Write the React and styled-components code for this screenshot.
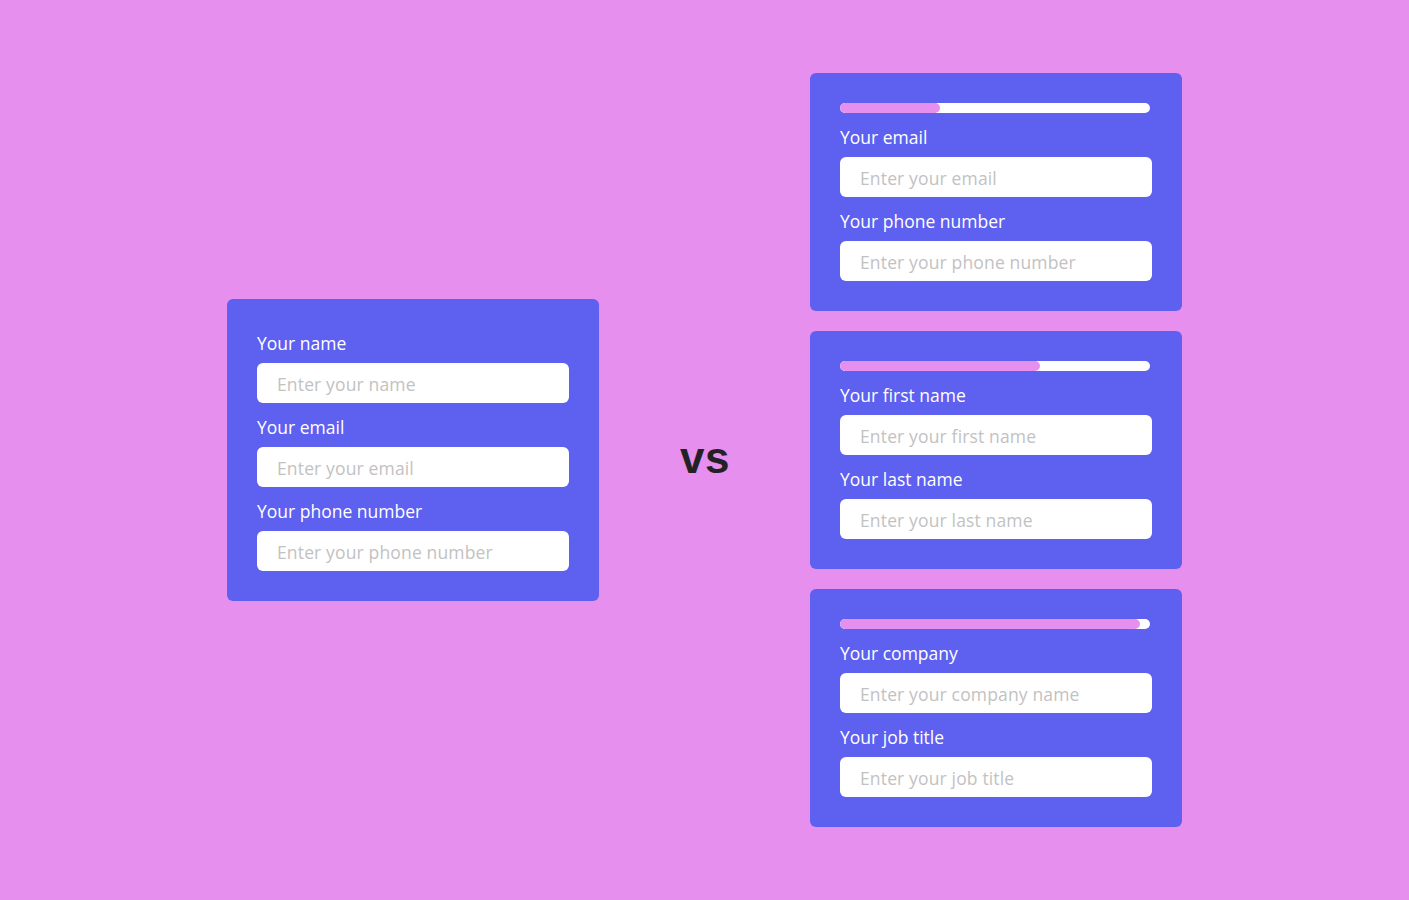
import styled, { createGlobalStyle } from "styled-components";

const GlobalStyle = createGlobalStyle`
  html, body {
    margin: 0;
    padding: 0;
    background: #e68fee;
  }
  * { box-sizing: border-box; }
`;

const Page = styled.div`
  width: 100%;
  height: 900px;
  display: flex;
  align-items: center;
  justify-content: center;
  gap: 81px;
  font-family: "Open Sans", "Liberation Sans", sans-serif;
`;

const Column = styled.div`
  display: flex;
  flex-direction: column;
  gap: 20px;
`;

const Card = styled.form`
  width: 372px;
  background: #5e60f0;
  border-radius: 6px;
  padding: 30px;
  display: flex;
  flex-direction: column;
`;

const Progress = styled.div`
  width: 310px;
  height: 10px;
  border-radius: 5px;
  background: #ffffff;
  overflow: hidden;
  margin-bottom: 10px;
`;

const ProgressFill = styled.div`
  height: 100%;
  width: ${(p) => p.$value}px;
  border-radius: 5px;
  background: #e68fee;
`;

const Field = styled.label`
  display: flex;
  flex-direction: column;
  & + & {
    margin-top: 10px;
  }
`;

const Label = styled.span`
  height: 24px;
  line-height: 28px;
  margin-bottom: 10px;
  color: #ffffff;
  font-size: 17.5px;
`;

const Input = styled.input`
  height: 40px;
  width: 100%;
  border: none;
  outline: none;
  border-radius: 6px;
  background: #ffffff;
  padding: 2px 20px 0;
  font-family: inherit;
  font-size: 17.5px;
  letter-spacing: 0.15px;
  color: #333;
  &::placeholder {
    color: #c2c2c2;
  }
`;

const Versus = styled.div`
  width: 49px;
  text-align: center;
  margin-top: 16px;
  font-family: "Liberation Sans", Arial, sans-serif;
  font-weight: 700;
  font-size: 44px;
  color: #222226;
  letter-spacing: 0.5px;
`;

const steps = [
  {
    progress: 100,
    fields: [
      ["Your email", "Enter your email"],
      ["Your phone number", "Enter your phone number"],
    ],
  },
  {
    progress: 200,
    fields: [
      ["Your first name", "Enter your first name"],
      ["Your last name", "Enter your last name"],
    ],
  },
  {
    progress: 300,
    fields: [
      ["Your company", "Enter your company name"],
      ["Your job title", "Enter your job title"],
    ],
  },
];

function FormField({ label, placeholder }) {
  return (
    <Field>
      <Label>{label}</Label>
      <Input placeholder={placeholder} />
    </Field>
  );
}

export default function App() {
  return (
    <>
      <GlobalStyle />
      <Page>
        <Card>
          <FormField label="Your name" placeholder="Enter your name" />
          <FormField label="Your email" placeholder="Enter your email" />
          <FormField label="Your phone number" placeholder="Enter your phone number" />
        </Card>
        <Versus>vs</Versus>
        <Column>
          {steps.map((step, i) => (
            <Card key={i}>
              <Progress>
                <ProgressFill $value={step.progress} />
              </Progress>
              {step.fields.map(([label, placeholder]) => (
                <FormField key={label} label={label} placeholder={placeholder} />
              ))}
            </Card>
          ))}
        </Column>
      </Page>
    </>
  );
}
